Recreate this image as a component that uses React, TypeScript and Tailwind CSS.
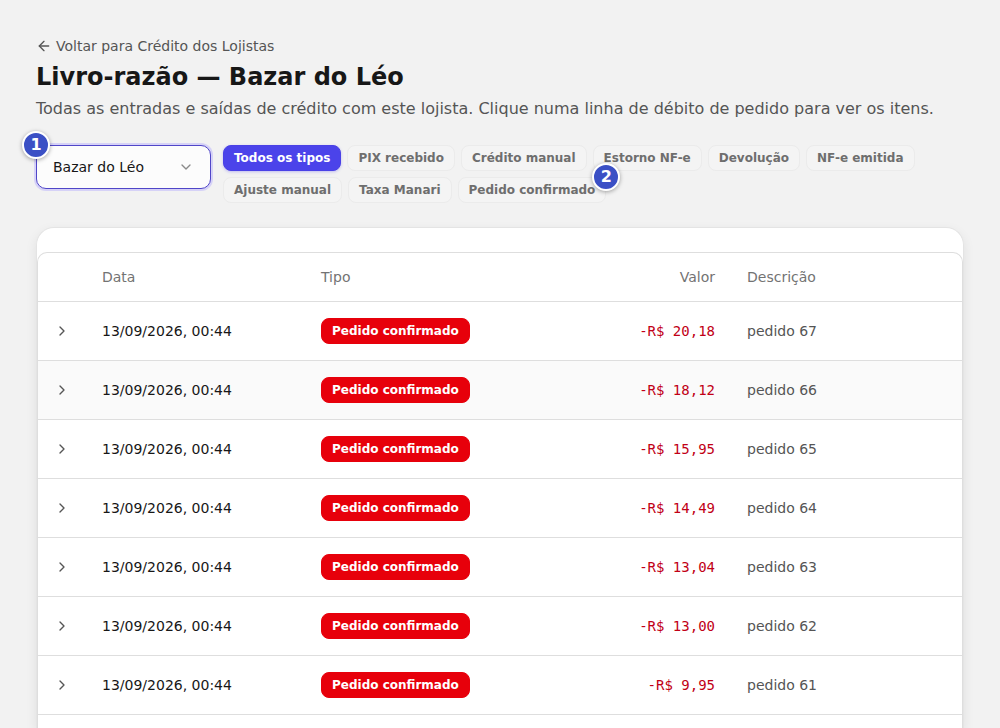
import React from 'react';
import { ArrowLeft, ChevronDown, ChevronRight } from 'lucide-react';

interface Entry {
  date: string;
  type: string;
  amount: string;
  description: string;
}

const filters = [
  'Todos os tipos',
  'PIX recebido',
  'Crédito manual',
  'Estorno NF-e',
  'Devolução',
  'NF-e emitida',
  'Ajuste manual',
  'Taxa Manari',
  'Pedido confirmado',
];

const entries: Entry[] = [
  { date: '13/09/2026, 00:44', type: 'Pedido confirmado', amount: '-R$ 20,18', description: 'pedido 67' },
  { date: '13/09/2026, 00:44', type: 'Pedido confirmado', amount: '-R$ 18,12', description: 'pedido 66' },
  { date: '13/09/2026, 00:44', type: 'Pedido confirmado', amount: '-R$ 15,95', description: 'pedido 65' },
  { date: '13/09/2026, 00:44', type: 'Pedido confirmado', amount: '-R$ 14,49', description: 'pedido 64' },
  { date: '13/09/2026, 00:44', type: 'Pedido confirmado', amount: '-R$ 13,04', description: 'pedido 63' },
  { date: '13/09/2026, 00:44', type: 'Pedido confirmado', amount: '-R$ 13,00', description: 'pedido 62' },
  { date: '13/09/2026, 00:44', type: 'Pedido confirmado', amount: '-R$ 9,95', description: 'pedido 61' },
];

const Marker: React.FC<{ label: string; className?: string }> = ({ label, className = '' }) => (
  <span
    className={`absolute z-10 flex size-7 items-center justify-center rounded-full border-2 border-white bg-[#3b50c5] text-base leading-none font-bold text-white shadow-[0_1px_4px_rgba(0,0,0,0.35)] ${className}`}
  >
    {label}
  </span>
);

const FilterChip: React.FC<{ label: string; active: boolean; onClick: () => void }> = ({ label, active, onClick }) => (
  <button
    type="button"
    aria-pressed={active}
    onClick={onClick}
    className={`block rounded-lg border px-2.5 py-1 text-xs font-bold whitespace-nowrap ${
      active
        ? 'border-[#4a41e6] bg-[#4b43ea] text-white shadow-[0_1px_3px_rgba(75,67,234,0.3)]'
        : 'border-[#ebebeb] bg-[#f4f4f4] text-[#6e6e6e]'
    }`}
  >
    {label}
  </button>
);

const EntryRow: React.FC<{ entry: Entry; striped: boolean }> = ({ entry, striped }) => (
  <tr className={`border-b border-[#dedede] ${striped ? 'bg-[#fafafa]' : 'bg-white'}`}>
    <td className="h-[59px]">
      <button type="button" aria-label={`Ver itens do ${entry.description}`} className="mx-auto block text-[#555555]">
        <ChevronRight className="size-4" />
      </button>
    </td>
    <td className="px-4 whitespace-nowrap text-[#171717]">{entry.date}</td>
    <td className="px-4">
      <span className="block w-fit rounded-lg border border-[#e7000b] bg-[#e7000b] px-2.5 py-1 text-xs font-bold whitespace-nowrap text-white">
        {entry.type}
      </span>
    </td>
    <td className="px-4 text-right font-['DejaVu_Sans_Mono',monospace] whitespace-nowrap text-[#c10016]">{entry.amount}</td>
    <td className="px-4 text-[#555555]">{entry.description}</td>
  </tr>
);

const App: React.FC = () => {
  const [filter, setFilter] = React.useState('Todos os tipos');

  return (
    <main className="flex min-h-screen flex-col bg-[#f2f2f2] px-9 pt-9 font-['DejaVu_Sans',sans-serif] text-[#171717]">
      <header>
        <a href="#creditos" className="flex w-fit items-center gap-1 text-sm text-[#555555]">
          <ArrowLeft className="size-4" />
          Voltar para Crédito dos Lojistas
        </a>
        <h1 className="mt-[5px] text-2xl leading-8 font-bold">Livro-razão — Bazar do Léo</h1>
        <p className="mt-1 text-base text-[#555555]">
          Todas as entradas e saídas de crédito com este lojista. Clique numa linha de débito de pedido para ver os itens.
        </p>
      </header>

      <section className="mt-6 flex items-start gap-3">
        <div className="relative w-[175px] shrink-0">
          <select
            aria-label="Lojista"
            className="h-11 w-full appearance-none rounded-[10px] border border-[#5046c8] bg-[#fcfcfc] px-4 text-sm text-[#171717] shadow-[0_0_0_2px_#d6d2f7] outline-none"
          >
            <option>Bazar do Léo</option>
          </select>
          <ChevronDown className="pointer-events-none absolute top-3.5 right-[17px] size-4 text-[#8a8a8a]" />
          <Marker label="1" className="-top-3.5 -left-3.5" />
        </div>
        <div className="flex flex-wrap gap-1.5">
          {filters.map((name) => (
            <div key={name} className="relative">
              <FilterChip label={name} active={name === filter} onClick={() => setFilter(name)} />
              {name === 'Pedido confirmado' && <Marker label="2" className="-top-3.5 -right-3.5" />}
            </div>
          ))}
        </div>
      </section>

      <section className="mt-6 flex flex-1 flex-col rounded-t-[18px] border border-b-0 border-[#e4e4e4] bg-white pt-6 shadow-[0_4px_12px_rgba(0,0,0,0.08)]">
        <div className="flex-1 overflow-hidden rounded-t-[10px] border border-b-0 border-[#dedede]">
          <table className="w-full table-fixed text-sm">
            <colgroup>
              <col className="w-12" />
              <col className="w-[219px]" />
              <col className="w-[246px]" />
              <col className="w-[180px]" />
              <col />
            </colgroup>
            <thead>
              <tr className="border-b border-[#dedede] text-left text-[#737373]">
                <th className="h-12" aria-label="Expandir" />
                <th className="px-4 font-normal">Data</th>
                <th className="px-4 font-normal">Tipo</th>
                <th className="px-4 text-right font-normal">Valor</th>
                <th className="px-4 font-normal">Descrição</th>
              </tr>
            </thead>
            <tbody>
              {entries.map((entry, index) => (
                <EntryRow key={entry.description} entry={entry} striped={index === 1} />
              ))}
            </tbody>
          </table>
        </div>
      </section>
    </main>
  );
};

export default App;
